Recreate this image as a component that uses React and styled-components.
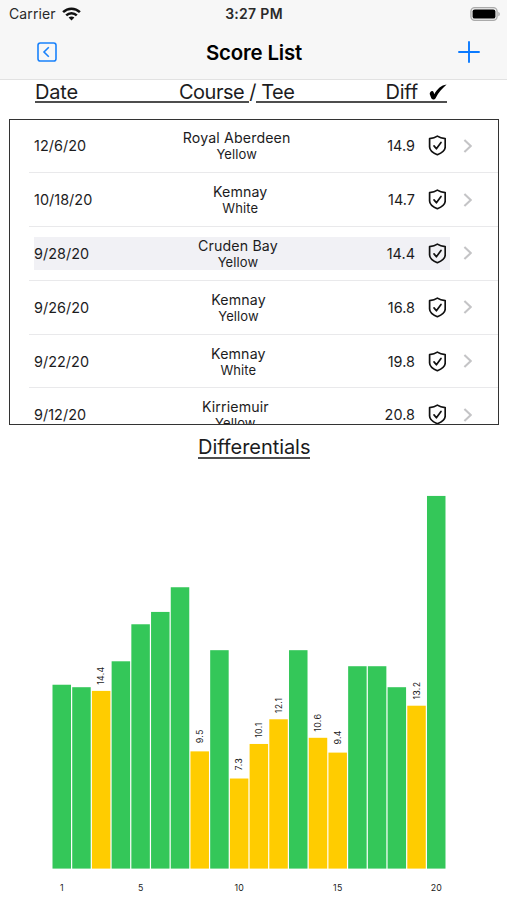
import React from "react"
import styled, { createGlobalStyle } from "styled-components"

const GlobalStyle = createGlobalStyle`
  * {
    box-sizing: border-box;
  }
  body {
    margin: 0;
    background: #fff;
    font-family: Inter, "Liberation Sans", sans-serif;
    color: #1c1c1e;
  }
`

const Screen = styled.div`
  width: 507px;
  height: 900px;
  overflow: hidden;
  background: #fff;
`

const TopArea = styled.header`
  height: 80px;
  background: #f7f7f7;
  border-bottom: 1px solid #e2e2e2;
`

const StatusBar = styled.div`
  display: grid;
  grid-template-columns: 1fr auto 1fr;
  align-items: center;
  height: 27px;
  padding: 0 6px 0 9px;
  font-size: 14px;
  color: #2a2a2a;
`

const Carrier = styled.div`
  display: flex;
  align-items: center;
  gap: 6px;
  letter-spacing: 0.1px;
`

const Time = styled.div`
  margin-right: 2px;
  font-size: 14px;
  font-weight: 600;
  letter-spacing: 0.3px;
`

const Battery = styled.svg`
  justify-self: end;
`

const NavBar = styled.div`
  display: grid;
  grid-template-columns: 1fr auto 1fr;
  align-items: center;
  height: 50px;
  padding: 0 27px 0 37px;
`

const Title = styled.h1`
  margin: 0 9px 0 0;
  font-size: 20.4px;
  font-weight: 600;
  letter-spacing: -0.15px;
  color: #000;
`

const AddIcon = styled.svg`
  justify-self: end;
`

const Columns = styled.div`
  display: flex;
  width: 412px;
  height: 23px;
  margin: 0 0 16px 35px;
  border-bottom: 2px solid #4e4e4e;
  font-size: 20px;
  line-height: 24px;
  letter-spacing: -0.2px;
`

const DateHead = styled.div`
  width: 144px;
`

const CourseHead = styled.div`
  flex: 1;
  letter-spacing: -0.5px;
`

const Slash = styled.span`
  display: inline-block;
  height: 23px;
  border-bottom: 2px solid #fff;
`

const DiffHead = styled.div`
  display: flex;
  gap: 11px;
`

const ScoreList = styled.div`
  width: 490px;
  height: 306px;
  margin-left: 9px;
  border: 1px solid #333;
  overflow: hidden;
`

const Row = styled.div`
  display: flex;
  align-items: center;
  height: 53.8px;
  margin-left: 19px;
  padding: 0 26px 0 5px;
  border-bottom: 1px solid #e9e9eb;

  &:first-child {
    margin-top: -0.5px;
  }
`

const RowBody = styled.div`
  display: flex;
  align-items: center;
  justify-content: space-between;
  width: 416px;
  height: 33px;
  margin-right: 13px;
  padding-right: 4px;
  background: ${(props) => (props.$selected ? "#f1f1f5" : "transparent")};
  font-size: 14.4px;
  letter-spacing: 0.05px;
`

const Course = styled.div`
  text-align: center;
  font-size: 14.2px;
  line-height: 17px;
  letter-spacing: 0.13px;
`

const Tee = styled.div`
  font-size: 13px;
  line-height: 16px;
  letter-spacing: 0.1px;
`

const Diff = styled.div`
  display: flex;
  align-items: center;
  gap: 13px;
`

const ChartTitle = styled.h2`
  width: fit-content;
  height: 25px;
  margin: 9px 0 0 198px;
  border-bottom: 2px solid #4e4e4e;
  font-size: 20px;
  font-weight: 400;
  line-height: 26px;
  letter-spacing: -0.05px;
`

const Chart = styled.svg`
  display: block;
  font-family: Inter, sans-serif;
  font-size: 8.8px;
  letter-spacing: 0.3px;
  fill: #1c1c1c;
`

const scores = [
  { date: "12/6/20", course: "Royal Aberdeen", tee: "Yellow", diff: "14.9" },
  { date: "10/18/20", course: "Kemnay", tee: "White", diff: "14.7" },
  { date: "9/28/20", course: "Cruden Bay", tee: "Yellow", diff: "14.4", selected: true },
  { date: "9/26/20", course: "Kemnay", tee: "Yellow", diff: "16.8" },
  { date: "9/22/20", course: "Kemnay", tee: "White", diff: "19.8" },
  { date: "9/12/20", course: "Kirriemuir", tee: "Yellow", diff: "20.8" },
]

const diffs = [
  14.9, 14.7, 14.4, 16.8, 19.8, 20.8, 22.8, 9.5, 17.7, 7.3,
  10.1, 12.1, 17.7, 10.6, 9.4, 16.4, 16.4, 14.7, 13.2, 30.2,
]
// rounds that count towards the handicap
const counting = [3, 8, 10, 11, 12, 14, 15, 19]
const ticks = [1, 5, 10, 15, 20]

const Wifi = () => (
  <svg width="19" height="14" viewBox="0 0 19 14" fill="none" stroke="#111" strokeWidth="2.5">
    <path d="M1.1 5.1C5.8.5 13.2.5 17.9 5.1" />
    <path d="M4.2 8.3c3-2.9 7.6-2.9 10.6 0" />
    <path d="M9.5 13.4 6.6 10.5c1.7-1.5 4.1-1.5 5.8 0z" fill="#111" stroke="none" />
  </svg>
)

const Shield = () => (
  <svg width="18" height="21" viewBox="0 0 18 21" fill="none" stroke="#111" strokeWidth="1.7" strokeLinecap="round" strokeLinejoin="round">
    <path d="M9.4 1.1C7.3 2.5 4.8 3.3 1.6 3.7v8.2c0 3.4 3.2 5.8 7.8 7.8 4.6-2 7.8-4.4 7.8-7.8V3.7C14 3.3 11.5 2.5 9.4 1.1z" />
    <path d="m6 10.9 2.4 2.9L13 7.4" />
  </svg>
)

const Chevron = () => (
  <svg width="9" height="14" viewBox="0 0 9 14" fill="none" stroke="#c4c4c6" strokeWidth="2.1">
    <path d="m1.4.9 6.4 6.1-6.4 6.1" />
  </svg>
)

const Bars = () => (
  <Chart width="507" height="441" viewBox="0 459 507 441">
    {diffs.map((value, i) => {
      const x = 52.5 + i * 19.71
      const height = value * 12.34
      const used = counting.includes(i + 1)
      return (
        <g key={i}>
          <rect x={x} y={868.6 - height} width="18.5" height={height} fill={used ? "#ffcc00" : "#34c759"} />
          {used && (
            <text transform={`translate(${x + 12.4} ${861 - height + (value < 10 ? -0.5 : 1.5)}) rotate(-90)`}>
              {value}
            </text>
          )}
        </g>
      )
    })}
    {ticks.map((n) => (
      <text key={n} x={61.9 + (n - 1) * 19.71} y="891.2" textAnchor="middle">
        {n}
      </text>
    ))}
  </Chart>
)

const App = () => (
  <Screen>
    <GlobalStyle />
    <TopArea>
      <StatusBar>
        <Carrier>
          Carrier
          <Wifi />
        </Carrier>
        <Time>3:27 PM</Time>
        <Battery width="31" height="14" viewBox="0 0 31 14">
          <rect x="0.9" y="0.7" width="26.2" height="12.6" rx="3.8" fill="#eee" stroke="#aaa" strokeWidth="1.3" />
          <rect x="2.6" y="2.4" width="22.8" height="9.2" rx="2.2" fill="#000" />
          <path d="M28.3 4.7c2 .8 2 3.8 0 4.6z" fill="#aaa" />
        </Battery>
      </StatusBar>
      <NavBar>
        <svg width="20" height="20" viewBox="0 0 20 20" fill="none" stroke="#1a82fb" strokeWidth="1.6">
          <rect x="1" y="1" width="18" height="18" rx="2.3" />
          <path d="M11.8 5.3 7 10l4.8 4.7" />
        </svg>
        <Title>Score List</Title>
        <AddIcon width="22" height="22" viewBox="0 0 22 22" stroke="#0a7aff" strokeWidth="1.9" strokeLinecap="round">
          <path d="M11 1v20M1 11h20" />
        </AddIcon>
      </NavBar>
    </TopArea>
    <Columns>
      <DateHead>Date</DateHead>
      <CourseHead>
        Course <Slash>/</Slash> Tee
      </CourseHead>
      <DiffHead>
        <span>Diff</span>
        <svg width="18" height="23" viewBox="0 0 18 23" fill="#000">
          <path d="M.7 14.1c-.1-1.8 1.2-3.2 2.500-3.200 1.200 0 1.700 1.300 2 3.300C8.500 8.800 12.100 5.500 17.600 4.600 13.400 8.200 9.500 12.800 6.700 17.900c-1.100 2.100-3.900 2-4.500.2z" />
        </svg>
      </DiffHead>
    </Columns>
    <ScoreList>
      {scores.map((s) => (
        <Row key={s.date}>
          <RowBody $selected={s.selected}>
            <span>{s.date}</span>
            <Course>
              {s.course}
              <Tee>{s.tee}</Tee>
            </Course>
            <Diff>
              {s.diff}
              <Shield />
            </Diff>
          </RowBody>
          <Chevron />
        </Row>
      ))}
    </ScoreList>
    <ChartTitle>Differentials</ChartTitle>
    <Bars />
  </Screen>
)

export default App
